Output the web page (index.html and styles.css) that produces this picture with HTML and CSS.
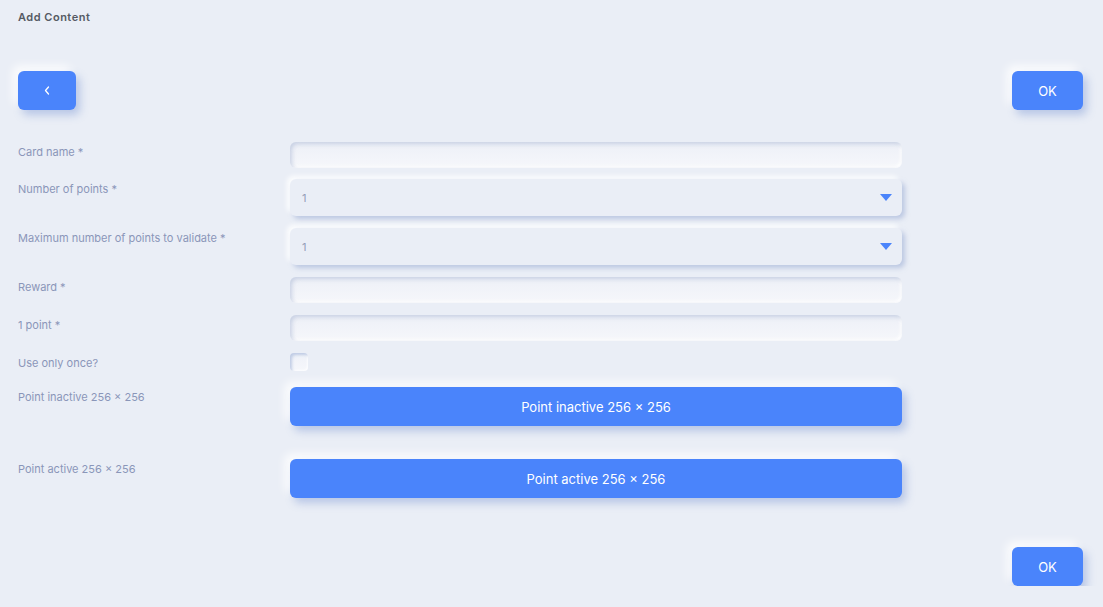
FILE: index.html
```html
<!DOCTYPE html>
<html lang="en">
<head>
    <meta charset="UTF-8">
    <meta name="viewport" content="width=device-width, initial-scale=1.0">
    <title>Add Content</title>
    <link rel="stylesheet" href="styles.css">
</head>
<body>

<div class="page">
    <h1 class="title">Add Content</h1>

    <!-- Top actions -->
    <div class="toolbar">
        <button class="btn btn-back" aria-label="Back">
            <svg width="6" height="9" viewBox="0 0 6 9"><polyline points="4.5,1 1.5,4.5 4.5,8" fill="none" stroke="#fff" stroke-width="1.3" stroke-linecap="round" stroke-linejoin="round"/></svg>
        </button>
        <button class="btn btn-ok">OK</button>
    </div>

    <!-- Form rows -->
    <div class="form">
        <div class="row row-card">
            <label class="label">Card name *</label>
            <input class="field" type="text">
        </div>
        <div class="row row-select">
            <label class="label">Number of points *</label>
            <div class="select">
                <span>1</span>
                <span class="arrow"></span>
            </div>
        </div>
        <div class="row row-select">
            <label class="label">Maximum number of points to validate *</label>
            <div class="select">
                <span>1</span>
                <span class="arrow"></span>
            </div>
        </div>
        <div class="row row-reward">
            <label class="label">Reward *</label>
            <input class="field" type="text">
        </div>
        <div class="row row-point">
            <label class="label">1 point *</label>
            <input class="field" type="text">
        </div>
        <div class="row row-check">
            <label class="label">Use only once?</label>
            <span class="checkbox"></span>
        </div>
        <div class="row row-upload">
            <label class="label">Point inactive 256 × 256</label>
            <button class="btn btn-upload">Point inactive 256 × 256</button>
        </div>
        <div class="row row-upload">
            <label class="label">Point active 256 × 256</label>
            <button class="btn btn-upload">Point active 256 × 256</button>
        </div>
    </div>

    <!-- Bottom action -->
    <div class="footer">
        <button class="btn btn-ok">OK</button>
    </div>
</div>

</body>
</html>
```

FILE: styles.css
```css
/* Basic page styling */
body {
    margin: 0;
    background: #eaeef6;
    font-family: Inter, "Noto Sans", sans-serif;
}

.page {
    padding: 10px 20px 0 18px;
}

/* Page title */
.title {
    margin: 0;
    font-size: 11px;
    font-weight: 600;
    line-height: 14px;
    color: #555a63;
    letter-spacing: 0.5px;
}

/* Buttons */
.btn {
    border: none;
    border-radius: 6px;
    background-color: #4a84fb;
    color: #fff;
    font-family: inherit;
    font-size: 13px;
    cursor: pointer;
    box-shadow: 4px 5px 9px rgba(88, 124, 200, 0.35), -5px -5px 10px rgba(255, 255, 255, 0.9);
}

.toolbar {
    display: flex;
    justify-content: space-between;
    margin-top: 47px;
}

.btn-back {
    width: 58px;
    height: 39px;
    display: flex;
    align-items: center;
    justify-content: center;
    padding: 0;
}

.btn-ok {
    width: 71px;
    height: 39px;
    padding: 0;
}

/* Form layout */
.form {
    margin-top: 32px;
    width: 884px;
}

.row {
    display: grid;
    grid-template-columns: 272px 612px;
    align-items: start;
}

.label {
    font-size: 11px;
    line-height: 14px;
    color: #8a96b9;
    padding-top: 3px;
}

/* Text inputs (inset) */
.field {
    box-sizing: border-box;
    height: 26px;
    width: 100%;
    border: none;
    border-radius: 6px;
    background: linear-gradient(180deg, #edf0f7 0%, #f6f7fb 100%);
    box-shadow: inset 2px 2px 4px rgba(170, 182, 212, 0.55), inset -2px -2px 3px rgba(255, 255, 255, 0.9);
    outline: none;
}

/* Dropdowns (raised) */
.select {
    box-sizing: border-box;
    height: 37px;
    display: flex;
    align-items: center;
    justify-content: space-between;
    padding: 0 10px 0 12px;
    border-radius: 6px;
    background: #eaeef6;
    font-size: 11px;
    color: #939db8;
    box-shadow: 3px 3px 5px rgba(150, 168, 210, 0.55), -3px -3px 5px rgba(255, 255, 255, 0.9);
}

.arrow {
    width: 0;
    height: 0;
    border-left: 6px solid transparent;
    border-right: 6px solid transparent;
    border-top: 7px solid #4a84fb;
}

/* Checkbox */
.checkbox {
    width: 18px;
    height: 18px;
    border-radius: 4px;
    background: linear-gradient(180deg, #eef1f8, #f6f7fb);
    box-shadow: inset 2px 2px 3px rgba(160, 178, 215, 0.6), inset -1px -1px 2px rgba(255, 255, 255, 0.9);
}

/* Image upload buttons */
.btn-upload {
    width: 100%;
    height: 39px;
    padding: 0;
}

/* Spacing between rows */
.row-card { margin-bottom: 11px; }
.row-select { margin-bottom: 12px; }
.row-reward { margin-bottom: 12px; }
.row-point { margin-bottom: 12px; }
.row-check { margin-bottom: 16px; }
.row-upload { margin-bottom: 33px; }
.row-upload:last-child { margin-bottom: 0; }

.footer {
    display: flex;
    justify-content: flex-end;
    margin-top: 49px;
}
```
